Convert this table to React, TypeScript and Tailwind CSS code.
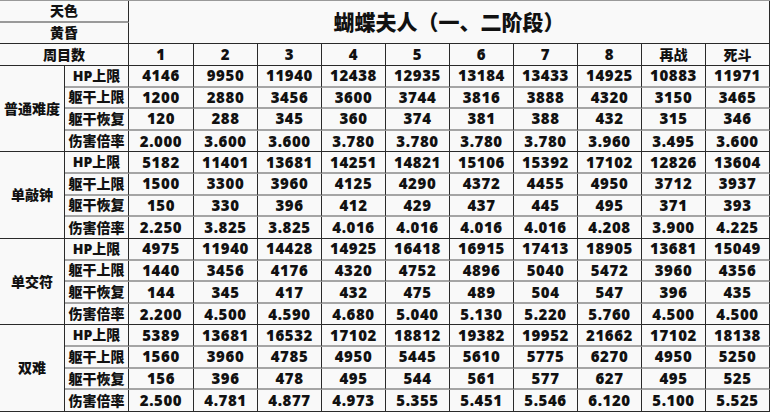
import React from 'react';

const cols = ['1', '2', '3', '4', '5', '6', '7', '8', '再战', '死斗'];

const groups = [
  {
    name: '普通难度',
    rows: [
      ['HP上限', '4146', '9950', '11940', '12438', '12935', '13184', '13433', '14925', '10883', '11971'],
      ['躯干上限', '1200', '2880', '3456', '3600', '3744', '3816', '3888', '4320', '3150', '3465'],
      ['躯干恢复', '120', '288', '345', '360', '374', '381', '388', '432', '315', '346'],
      ['伤害倍率', '2.000', '3.600', '3.600', '3.780', '3.780', '3.780', '3.780', '3.960', '3.495', '3.600'],
    ],
  },
  {
    name: '单敲钟',
    rows: [
      ['HP上限', '5182', '11401', '13681', '14251', '14821', '15106', '15392', '17102', '12826', '13604'],
      ['躯干上限', '1500', '3300', '3960', '4125', '4290', '4372', '4455', '4950', '3712', '3937'],
      ['躯干恢复', '150', '330', '396', '412', '429', '437', '445', '495', '371', '393'],
      ['伤害倍率', '2.250', '3.825', '3.825', '4.016', '4.016', '4.016', '4.016', '4.208', '3.900', '4.225'],
    ],
  },
  {
    name: '单交符',
    rows: [
      ['HP上限', '4975', '11940', '14428', '14925', '16418', '16915', '17413', '18905', '13681', '15049'],
      ['躯干上限', '1440', '3456', '4176', '4320', '4752', '4896', '5040', '5472', '3960', '4356'],
      ['躯干恢复', '144', '345', '417', '432', '475', '489', '504', '547', '396', '435'],
      ['伤害倍率', '2.200', '4.500', '4.590', '4.680', '5.040', '5.130', '5.220', '5.760', '4.500', '4.500'],
    ],
  },
  {
    name: '双难',
    rows: [
      ['HP上限', '5389', '13681', '16532', '17102', '18812', '19382', '19952', '21662', '17102', '18138'],
      ['躯干上限', '1560', '3960', '4785', '4950', '5445', '5610', '5775', '6270', '4950', '5250'],
      ['躯干恢复', '156', '396', '478', '495', '544', '561', '577', '627', '495', '525'],
      ['伤害倍率', '2.500', '4.781', '4.877', '4.973', '5.355', '5.451', '5.546', '6.120', '5.100', '5.525'],
    ],
  },
];

const cell = 'flex items-center justify-center border-r border-r-[#2a2a2a] leading-none';
const cjk = 'text-[14px] font-extrabold';
const num = 'text-[15px] font-extrabold tracking-[0.6px]';

export default function App() {
  return (
    <div
      className="w-[770px] h-[412px] bg-[#f9f9f9] text-[#111] overflow-hidden"
      style={{ fontFamily: '"Open Sans", "Noto Sans CJK SC", sans-serif' }}
    >
      <div className="grid h-[412px] grid-cols-[65px_64px_65px_repeat(9,64px)] grid-rows-[repeat(19,minmax(0,1fr))] border-t border-t-[#9a9a9a]">
        {/* header block */}
        <div className={`${cell} ${cjk} col-span-2 border-b-2 border-b-[#9a9a9a]`}>天色</div>
        <div className={`${cell} col-span-10 row-span-2 border-b border-b-[#2a2a2a] text-[21px] font-extrabold`}>
          蝴蝶夫人（一、二阶段）
        </div>
        <div className={`${cell} ${cjk} col-span-2 border-b border-b-[#2a2a2a]`}>黄昏</div>
        <div className={`${cell} ${cjk} col-span-2 border-b border-b-[#2a2a2a]`}>周目数</div>
        {cols.map((c, i) => (
          <div key={c} className={`${cell} ${i < 8 ? num : cjk} border-b border-b-[#2a2a2a]`}>
            {c}
          </div>
        ))}

        {groups.map((g) => (
          <React.Fragment key={g.name}>
            <div className={`${cell} ${cjk} row-span-4 border-b border-b-[#2a2a2a]`}>{g.name}</div>
            {g.rows.map((r, ri) => {
              const last = ri === g.rows.length - 1;
              const bottom = last ? 'border-b border-b-[#2a2a2a]' : 'border-b-2 border-b-[#a5a5a5]';
              return r.map((v, ci) => (
                <div key={`${ri}-${ci}`} className={`${cell} ${ci === 0 ? cjk : num} ${bottom}`}>
                  {v}
                </div>
              ));
            })}
          </React.Fragment>
        ))}
      </div>
    </div>
  );
}
